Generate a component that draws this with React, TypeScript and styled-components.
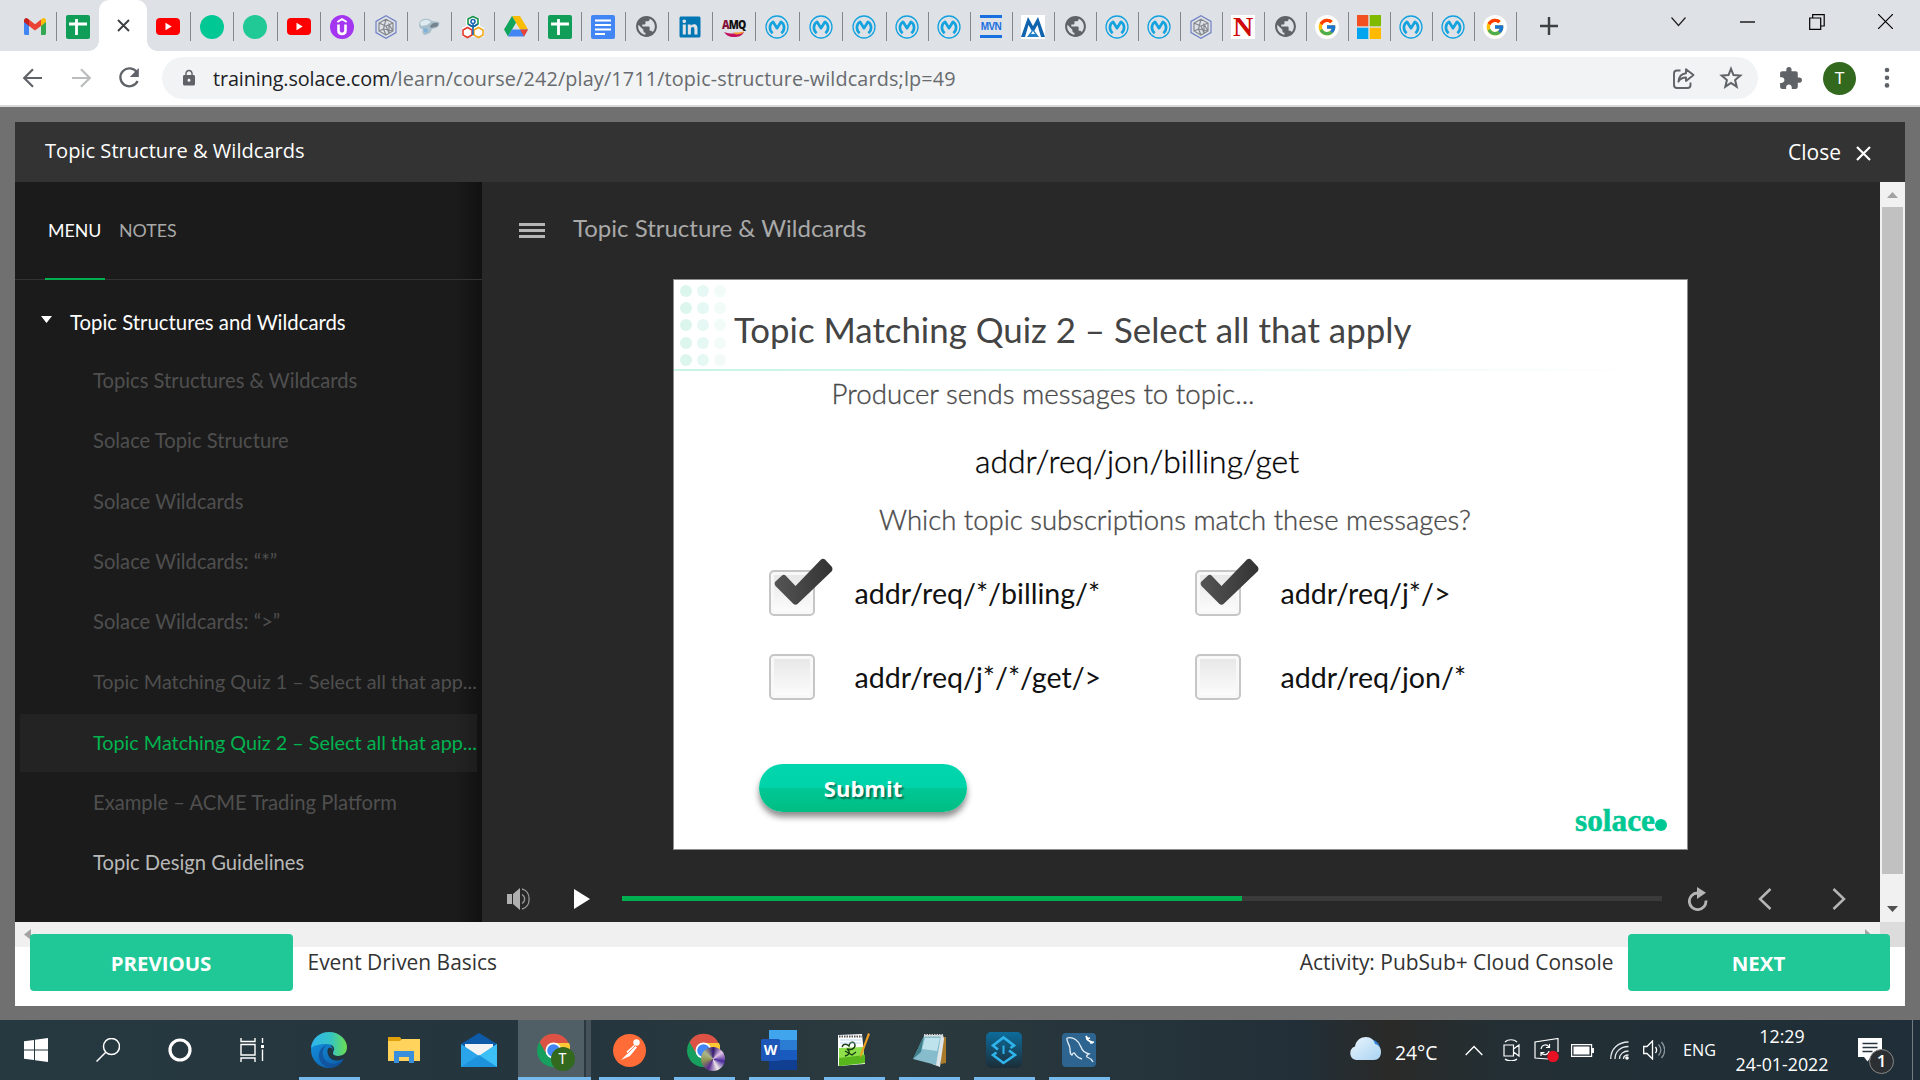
import React from "react";
import styled, { createGlobalStyle, css } from "styled-components";
import { FcGoogle } from "react-icons/fc";
import { FaLinkedin } from "react-icons/fa";
import { MdExtension, MdLock, MdPublic } from "react-icons/md";

const SANS = `"Open Sans", "Noto Sans", sans-serif`;
const LATO = `Lato, "Open Sans", sans-serif`;

const Global = createGlobalStyle`
  * { box-sizing: border-box; }
  body { margin: 0; background: #707070; font-family: ${SANS}; overflow: hidden; }
  svg { display: block; flex: none; }
`;

const Screen = styled.div`
  width: 1920px;
  height: 1080px;
  display: flex;
  flex-direction: column;
  overflow: hidden;
`;

/* ---------- browser ---------- */
const TabStrip = styled.div`
  height: 51px;
  background: #dee1e6;
  display: flex;
  align-items: flex-start;
  padding-left: 13px;
`;
const Tab = styled.div<{ $w: number; $sep?: boolean }>`
  width: ${(p) => p.$w}px;
  height: 29px;
  margin-top: 12px;
  display: flex;
  align-items: center;
  justify-content: center;
  flex: none;
  border-right: 1.4px solid ${(p) => (p.$sep ? "#84878b" : "transparent")};
`;
const ActiveTab = styled.div`
  width: 48px;
  height: 51px;
  flex: none;
  background: #fff;
  border-radius: 10px 10px 0 0;
  display: flex;
  align-items: center;
  justify-content: center;
  position: relative;
  &::before, &::after {
    content: "";
    position: absolute;
    bottom: 0;
    width: 10px;
    height: 10px;
  }
  &::before { left: -10px; background: radial-gradient(circle at 0 0, transparent 9.5px, #fff 10px); }
  &::after { right: -10px; background: radial-gradient(circle at 100% 0, transparent 9.5px, #fff 10px); }
`;
const NewTab = styled.div`
  width: 64px;
  height: 51px;
  display: flex;
  align-items: center;
  justify-content: center;
`;
const WindowControls = styled.div`
  margin-left: auto;
  display: flex;
  height: 43px;
`;
const WindowButton = styled.div`
  width: 69px;
  display: flex;
  align-items: center;
  justify-content: center;
`;
const Toolbar = styled.div`
  height: 54px;
  background: #fff;
  display: flex;
  align-items: center;
  padding: 0 21px 0 21px;
`;
const NavButtons = styled.div`
  display: flex;
  gap: 24px;
  width: 141px;
`;
const Omnibox = styled.div`
  width: 1596px;
  height: 42px;
  border-radius: 21px;
  background: #f1f3f4;
  display: flex;
  align-items: center;
  padding: 0 15px 0 18px;
`;
const Url = styled.div`
  font: 400 19.8px/42px ${SANS};
  color: #686b6f;
  margin-left: 15px;
  flex: 1;
  padding-top: 1px;
  letter-spacing: 0.15px;
  white-space: nowrap;
`;
const Domain = styled.span`color: #202124; letter-spacing: -0.1px;`;
const OmniActions = styled.div`display: flex; gap: 24px; align-items: center;`;
const ToolbarActions = styled.div`display: flex; align-items: center; margin-left: 20px;`;
const Avatar = styled.div`
  width: 33px;
  height: 33px;
  border-radius: 50%;
  background: #33691e;
  color: #fff;
  font: 400 17px/33px Roboto, sans-serif;
  text-align: center;
  margin: 0 28px 0 20px;
`;
const Hairline = styled.div`height: 2px; background: #d9d9d9;`;

/* ---------- favicons ---------- */
const GreenDot = styled.div<{ $c: string }>`
  width: 24px; height: 24px; border-radius: 50%; background: ${(p) => p.$c};
`;
const GoogleDisc = styled.div`
  width: 24px; height: 24px; border-radius: 50%; background: #fff; display: grid; place-items: center;
`;
const AmqIcon = styled.div`
  display: flex; flex-direction: column; align-items: center; width: 24px; height: 20px;
`;
const AmqText = styled.div`
  font: 800 13px/14px "Open Sans", sans-serif; letter-spacing: -1px; color: #111; transform: scaleX(0.8);
  & > span { color: #84123c; }
`;
const MvnIcon = styled.div`
  width: 22px; height: 23px; border-top: 3px solid #1a6fe0; border-bottom: 3px solid #1a6fe0;
  font: 700 10px/17px "Liberation Sans", sans-serif; color: #1a6fe0; text-align: center; letter-spacing: -0.6px;
`;
const NIcon = styled.div`
  width: 24px; height: 24px; background: #fff; color: #cf0a0a;
  font: 700 28px/24px "Liberation Serif", serif; text-align: center;
`;

const Gmail = () => (
  <svg width="22" height="17" viewBox="0 0 22 17">
    <path d="M0 2v13.500C0 16.300.7 17 1.500 17H5V7L0 3z" fill="#4285f4" />
    <path d="M22 2v13.500c0 .8-.7 1.500-1.500 1.500H17V7l5-4z" fill="#34a853" />
    <path d="M17 1.500V8l5-4V2.500C22 .3 19.600-.7 18 .7z" fill="#fbbc04" />
    <path d="M5 8V1.500l6 4.700 6-4.700V8l-6 4.600z" fill="#ea4335" />
    <path d="M0 2.500V4l5 4V1.500L4 .7C2.400-.7 0 .3 0 2.500z" fill="#c5221f" />
  </svg>
);
const Sheets = () => (
  <svg width="24" height="24" viewBox="0 0 24 24">
    <rect width="24" height="24" rx="2" fill="#0f9d58" />
    <path d="M3 9h18M10.500 4v16" stroke="#fff" strokeWidth="2.800" fill="none" />
  </svg>
);
const Docs = () => (
  <svg width="24" height="24" viewBox="0 0 24 24">
    <rect width="24" height="24" rx="2" fill="#4285f4" />
    <path d="M4 5.500h16M4 10h16M4 14.500h16M4 19h10" stroke="#fff" strokeWidth="2" />
  </svg>
);
const YouTube = () => (
  <svg width="24" height="18" viewBox="0 0 24 18">
    <rect width="24" height="17" rx="4" fill="#f00" />
    <path d="M9.500 4.800v7.400l6.200-3.700z" fill="#fff" />
  </svg>
);
const Udemy = () => (
  <svg width="24" height="24" viewBox="0 0 24 24">
    <circle cx="12" cy="12" r="12" fill="#a435f0" />
    <path d="M7.300 7 12 4.200 16.700 7" stroke="#fff" strokeWidth="2" fill="none" />
    <path d="M8.500 9.500v6c0 4.600 7 4.600 7 0v-6" stroke="#fff" strokeWidth="2.600" fill="none" />
  </svg>
);
const Hexagon = () => (
  <svg width="24" height="24" viewBox="0 0 24 24" fill="none" strokeWidth="1.200">
    <path d="M12 .8 22 6.400v11.200L12 23.200 2 17.600V6.400z" stroke="#6f80c4" />
    <path d="M12 4.200 19 8v8l-7 4-7-4V8zM12 4.200 9.500 14 5 16M5 8l7 3 7-3M9.500 14l9.500 2M12 11l3 7M9.500 14 12 20M15 18V9.500L19 16" stroke="#84898f" />
  </svg>
);
const Bird = () => (
  <svg width="22" height="18" viewBox="0 0 22 18">
    <path d="M1 6C2 1 9-1 14 3l7 1c1 2 0 5-3 6l-4 1-2 4-5 2c-3-1-3-4-2-6-3 0-4-2-4-5z" fill="#a9bfcb" />
    <path d="M2 5c3-4 8-4 11-1l-4 3-6 1z" fill="#dfeaf0" />
    <path d="M12 8c2-3 5-4 8-3 1 2-1 4-3 4l-4 1z" fill="#75838e" />
    <path d="M5 10l5 1-1 4-3-1z" fill="#7fb2da" />
  </svg>
);
const Rings = () => (
  <svg width="24" height="24" viewBox="0 0 24 24" fill="none" strokeWidth="1.600">
    <path d="M12 0l7 4v7l4 2v9H1v-9l4-2V4z" fill="#fff" />
    <path d="M12 1.500 17 4v5l-5 3-5-3V4z" stroke="#159447" />
    <path d="M6.500 12.500 11 15v5l-4.500 2.500L2 20v-5z" stroke="#e43b2e" />
    <path d="M17.500 12.500 22 15v5l-4.500 2.500L13 20v-5z" stroke="#f2a91d" />
    <path d="M12 9v11M8 9c1 3 7 3 8 0" stroke="#1c66b4" />
    <circle cx="12" cy="6.500" r="2" stroke="#1c66b4" />
  </svg>
);
const Drive = () => (
  <svg width="24" height="21" viewBox="0 0 24 21">
    <path d="M8 0h8l8 13.500h-8z" fill="#fbbc04" />
    <path d="M8 0l4 6.800L4 20.500 0 13.500z" fill="#11a45c" />
    <path d="M8 13.500h16L20 20.500H4z" fill="#4285f4" />
    <path d="M16 13.500h8L20 20.500z" fill="#ea4335" />
  </svg>
);
const Mule = () => (
  <svg width="24" height="24" viewBox="0 0 24 24" fill="none" stroke="#15a3df">
    <circle cx="12" cy="12" r="11" strokeWidth="1.300" />
    <path d="M7.600 18.200C3.700 14.800 4.200 9.200 8 6.800l4 6.400 4-6.400c3.800 2.400 4.300 8 .4 11.400" strokeWidth="2.700" strokeLinejoin="round" />
  </svg>
);
const Peaks = () => (
  <svg width="24" height="24" viewBox="0 0 24 24">
    <rect width="24" height="24" fill="#fff" />
    <path d="M0 22 7 2l5 9 5-9 7 20h-4L16.500 10 12 18 7.500 10 4 22z" fill="#1063ad" />
    <path d="M6 22l6-8 6 8z" fill="#1f7fc9" />
    <path d="M10 19l2-3 2 3z" fill="#fff" />
  </svg>
);
const Microsoft = () => (
  <svg width="24" height="24" viewBox="0 0 24 24">
    <path d="M0 0h11.300v11.300H0z" fill="#f25022" />
    <path d="M12.700 0H24v11.300H12.700z" fill="#7fba00" />
    <path d="M0 12.700h11.300V24H0z" fill="#00a4ef" />
    <path d="M12.700 12.700H24V24H12.700z" fill="#ffb900" />
  </svg>
);
const Favicon = ({ kind }: { kind: string }) => {
  switch (kind) {
    case "gmail": return <Gmail />;
    case "sheets": return <Sheets />;
    case "docs": return <Docs />;
    case "youtube": return <YouTube />;
    case "green": return <GreenDot $c="#00c895" />;
    case "green2": return <GreenDot $c="#21c997" />;
    case "udemy": return <Udemy />;
    case "hex": return <Hexagon />;
    case "bird": return <Bird />;
    case "rings": return <Rings />;
    case "drive": return <Drive />;
    case "globe": return <MdPublic size={25} color="#5f6368" />;
    case "linkedin": return <FaLinkedin size={24} color="#0077b5" />;
    case "amq": return (
      <AmqIcon>
        <AmqText><span>A</span>MQ</AmqText>
        <svg width="20" height="6" viewBox="0 0 20 6">
          <path d="M0 1c6 2 12 2 20 0-2 4-5 5-10 5S2 4 0 1z" fill="#c3125f" />
          <path d="M9 1.500c4 0 8 0 11-1-1 2-4 3-8 3z" fill="#f59b23" />
        </svg>
      </AmqIcon>
    );
    case "mule": return <Mule />;
    case "mvn": return <MvnIcon>MVN</MvnIcon>;
    case "peaks": return <Peaks />;
    case "n": return <NIcon>N</NIcon>;
    case "google": return <GoogleDisc><FcGoogle size={20} /></GoogleDisc>;
    default: return <Microsoft />;
  }
};

const wideTabs = ["green", "green2", "youtube", "udemy", "hex", "bird", "rings", "drive", "sheets", "docs", "globe", "linkedin", "amq", "mule", "mule", "mule"];
const narrowTabs = ["mule", "mule", "mvn", "peaks", "globe", "mule", "mule", "hex", "n", "globe", "google", "microsoft", "mule", "mule", "google"];

const Browser = () => (
  <>
    <TabStrip>
      <Tab $w={44} $sep><Favicon kind="gmail" /></Tab>
      <Tab $w={42}><Favicon kind="sheets" /></Tab>
      <ActiveTab>
        <svg width="13" height="13" viewBox="0 0 13 13"><path d="M1 1l11 11M12 1 1 12" stroke="#3c4043" strokeWidth="1.900" /></svg>
      </ActiveTab>
      <Tab $w={43.500} $sep><Favicon kind="youtube" /></Tab>
      {wideTabs.map((k, i) => <Tab key={i} $w={43.500} $sep><Favicon kind={k} /></Tab>)}
      {narrowTabs.map((k, i) => <Tab key={i} $w={42} $sep><Favicon kind={k} /></Tab>)}
      <NewTab>
        <svg width="18" height="18" viewBox="0 0 18 18"><path d="M9 0v18M0 9h18" stroke="#3c4043" strokeWidth="2.400" /></svg>
      </NewTab>
      <WindowControls>
        <WindowButton><svg width="15" height="10" viewBox="0 0 15 10"><path d="M.5.5l7 8 7-8" fill="none" stroke="#222" strokeWidth="1.200" /></svg></WindowButton>
        <WindowButton><svg width="15" height="2" viewBox="0 0 15 2"><path d="M0 1h15" stroke="#000" strokeWidth="1.300" /></svg></WindowButton>
        <WindowButton><svg width="16" height="16" viewBox="0 0 16 16"><path d="M.7 4h11v11.300H.7zM3.700 4V.7h11.500V12h-3.500" fill="none" stroke="#000" strokeWidth="1.200" /></svg></WindowButton>
        <WindowButton><svg width="15" height="15" viewBox="0 0 15 15"><path d="M0 0l15 15M15 0 0 15" stroke="#000" strokeWidth="1.200" /></svg></WindowButton>
      </WindowControls>
    </TabStrip>
    <Toolbar>
      <NavButtons>
        <svg width="24" height="24" viewBox="0 0 24 24"><path d="M21 12H3.500M12 3.200 3.200 12l8.800 8.800" fill="none" stroke="#5f6368" strokeWidth="2.200" /></svg>
        <svg width="24" height="24" viewBox="0 0 24 24"><path d="M3 12h17.500M12 3.200l8.800 8.800-8.800 8.800" fill="none" stroke="#babcbe" strokeWidth="2.200" /></svg>
        <svg width="24" height="24" viewBox="0 0 24 24"><path d="M19.800 6.200A9 9 0 1 0 20.600 15" fill="none" stroke="#5f6368" strokeWidth="2.300" /><path d="M21.800 2v9h-9z" fill="#5f6368" /></svg>
      </NavButtons>
      <Omnibox>
        <MdLock size={18} color="#5f6368" />
        <Url><Domain>training.solace.com</Domain>/learn/course/242/play/1711/topic-structure-wildcards;lp=49</Url>
        <OmniActions>
          <svg width="23" height="23" viewBox="0 0 23 23" fill="none" stroke="#5f6368" strokeWidth="1.900" strokeLinejoin="round">
            <path d="M8.500 3.500H5a3 3 0 0 0-3 3V18a3 3 0 0 0 3 3h10.500a3 3 0 0 0 3-3v-2.500" />
            <path d="M14 2.200 21.500 8 14 14v-3.500c-3.500 0-6 1.200-7.500 4.200.3-5.200 3-8 7.500-8.500z" />
          </svg>
          <svg width="24" height="24" viewBox="0 0 24 24" fill="none" stroke="#5f6368" strokeWidth="2"><path d="M12 2.800l2.500 6.300 6.800.5-5.200 4.400 1.600 6.700L12 17l-5.700 3.700L7.900 14 2.700 9.600l6.800-.5z" /></svg>
        </OmniActions>
      </Omnibox>
      <ToolbarActions>
        <MdExtension size={25} color="#5f6368" />
        <Avatar>T</Avatar>
        <svg width="6" height="22" viewBox="0 0 6 22" fill="#5f6368"><circle cx="3" cy="3" r="2.300" /><circle cx="3" cy="10.700" r="2.300" /><circle cx="3" cy="18.400" r="2.300" /></svg>
      </ToolbarActions>
    </Toolbar>
    <Hairline />
  </>
);

/* ---------- course modal ---------- */
const PageArea = styled.main`
  height: 913px;
  background: #707070;
  padding: 15px 15px 14px;
`;
const Modal = styled.div`
  height: 884px;
  background: #fff;
  display: flex;
  flex-direction: column;
`;
const ModalHeader = styled.header`
  height: 60px;
  background: #333;
  color: #fff;
  display: flex;
  justify-content: space-between;
  align-items: center;
  padding: 0 34px 0 30px;
`;
const ModalTitle = styled.div`font: 400 20.100px/58px ${SANS}; height: 60px;`;
const CloseButton = styled.div`
  display: flex;
  align-items: center;
  gap: 15px;
  font: 400 21px/60px ${SANS};
  & svg { margin-top: 3px; }
`;
const Player = styled.div`display: flex; height: 740px;`;
const Sidebar = styled.aside`
  width: 467px;
  background: #1b1b1b;
  background-image: linear-gradient(to right, transparent 440px, #111 467px);
  font-family: ${LATO};
`;
const SideTabs = styled.div`
  height: 98px;
  border-bottom: 1px solid #333;
  padding-left: 30px;
  display: flex;
`;
const SideTab = styled.div<{ $active?: boolean }>`
  height: 98px;
  padding: 0 3px;
  margin-right: 11px;
  font-size: 17.800px;
  line-height: 97px;
  color: ${(p) => (p.$active ? "#fff" : "#a8a8a8")};
  ${(p) => p.$active && css`border-bottom: 2px solid #00b050; width: 60px;`}
`;
const SectionRow = styled.div`
  height: 72px;
  display: flex;
  align-items: center;
  color: #fff;
  font-size: 20.330px;
  padding: 12px 0 0 26px;
  gap: 18px;
  & svg { margin-bottom: 5px; }
`;
const LessonRow = styled.div<{ $state?: "current" | "next"; $long: boolean }>`
  height: 58px;
  margin: 0 5px 2.300px;
  padding-left: 73px;
  font-size: ${(p) => (p.$long ? 19.800 : 20.200)}px;
  line-height: 57px;
  white-space: nowrap;
  color: ${(p) => (p.$state === "current" ? "#00b34f" : p.$state === "next" ? "#b8b8b8" : "#4f4f4f")};
  background: ${(p) => (p.$state === "current" ? "rgba(60,60,60,0.25)" : "transparent")};
`;
const Stage = styled.section`
  width: 1398px;
  background: #282828;
  display: flex;
  flex-direction: column;
`;
const StageHeader = styled.div`
  height: 97px;
  display: flex;
  align-items: center;
  padding-left: 37px;
  gap: 28px;
  color: #a9a9a9;
  font: 400 24px/92px ${LATO};
`;
const StageTitle = styled.div`height: 97px;`;
const Hamburger = styled.div`
  width: 26px;
  height: 15px;
  border-top: 3px solid #b5b5b5;
  border-bottom: 3px solid #b5b5b5;
  padding: 3px 0;
  background: #b5b5b5;
  background-clip: content-box;
`;
const Slide = styled.div`
  width: 1015px;
  height: 571px;
  margin-left: 191px;
  border: 1px solid #8c8c8c;
  background: #fff;
  display: flex;
  flex-direction: column;
  font-family: ${LATO};
`;
const SlideHeader = styled.div`height: 89px; display: flex;`;
const DotGrid = styled.div`
  display: grid;
  grid-template-columns: repeat(3, 12px);
  grid-auto-rows: 12px;
  gap: 5.200px;
  padding: 5px 0 0 6px;
  width: 60px;
`;
const Dot = styled.i<{ $c: string }>`border-radius: 50%; background: ${(p) => p.$c};`;
const SlideTitle = styled.h1`
  margin: 0;
  padding-top: 9px;
  font: 400 34.850px/81px ${LATO};
  color: #444;
  white-space: nowrap;
`;
const SlideRule = styled.div`height: 2px; background: linear-gradient(to right, #c6f4e6, #fff 96%);`;
const Prompt = styled.p<{ $x: number; $top: number; $size: number; $color: string }>`
  margin: ${(p) => p.$top}px 0 0 ${(p) => p.$x}px;
  font: 300 ${(p) => p.$size}px/40px ${LATO};
  color: ${(p) => p.$color};
  -webkit-text-stroke: 0.350px ${(p) => p.$color};
  white-space: nowrap;
`;
const Options = styled.div`
  display: grid;
  grid-template-columns: 426px 400px;
  grid-auto-rows: 45px;
  row-gap: 39.500px;
  margin: 30px 0 0 95px;
`;
const Option = styled.label`
  display: flex;
  align-items: center;
  gap: 39.500px;
  font: 400 28.600px/44px ${LATO};
  color: #111;
  white-space: nowrap;
`;
const Box = styled.span`
  width: 46px;
  height: 46px;
  flex: none;
  border: 2px solid #c6c6c6;
  border-radius: 5px;
  background: linear-gradient(#e6e6e6, #fdfdfd);
  box-shadow: inset 0 0 0 3px #f8f8f8;
`;
const Tick = styled.svg`position: relative; left: 3px; top: -14px; overflow: visible;`;
const SlideFooter = styled.div`
  display: flex;
  justify-content: space-between;
  padding: 64px 20px 0 85px;
`;
const Submit = styled.button`
  width: 208px;
  height: 48px;
  border: 0;
  padding: 0;
  border-radius: 24px;
  background: linear-gradient(#00d6ae 0, #00d3a9 50%, #00c896 50%, #00bd83 100%);
  box-shadow: 0 5px 6px rgba(0, 0, 0, 0.45);
  color: #fff;
  font: 700 22px/46px ${SANS};
  text-shadow: 2px 2px 2px rgba(0, 0, 0, 0.45);
`;
const Logo = styled.div`
  display: flex;
  align-items: center;
  padding-top: 33px;
  height: 82px;
  color: #00c895;
  font: 700 31.300px/40px "Liberation Serif", serif;
  -webkit-text-stroke: 0.5px #00c895;
  &::after {
    content: "";
    width: 12px;
    height: 12px;
    border-radius: 50%;
    background: #00c895;
    margin-top: 7px;
  }
`;
const Controls = styled.div`
  height: 72px;
  display: flex;
  align-items: center;
  padding: 25px 0 0 25px;
`;
const PlayIcon = styled.svg`margin-left: 42px;`;
const Track = styled.div`
  width: 1040px;
  height: 5px;
  background: #3b3b3b;
  margin: 0 26px 1px 32px;
`;
const Fill = styled.div`width: 620px; height: 5px; background: #00b050;`;
const StepArrows = styled.div`display: flex; gap: 60px; margin-left: 50px;`;
const VScroll = styled.div`
  width: 25px;
  background: #f1f1f1;
  display: flex;
  flex-direction: column;
  align-items: center;
`;
const ScrollArrow = styled.div<{ $h: number; $pt: number }>`
  height: ${(p) => p.$h}px;
  padding-top: ${(p) => p.$pt}px;
`;
const Thumb = styled.div`width: 21px; height: 667px; background: #c1c1c1;`;
const HScroll = styled.div`
  height: 25px;
  background: #f0f0f0;
  display: flex;
  padding-left: 9px;
  & > svg { margin-top: 7px; }
`;
const Corner = styled.div`width: 25px; height: 25px; background: #dcdcdc; margin-left: 9px;`;
const Spacer = styled.div`flex: 1;`;
const ModalFooter = styled.footer`
  height: 59px;
  margin-top: -13px;
  padding: 0 15px;
  display: flex;
  align-items: flex-start;
  gap: 14.500px;
  color: #333;
  font: 400 20.950px/57px ${SANS};
  position: relative;
`;
const NavButton = styled.button<{ $w: number }>`
  width: ${(p) => p.$w}px;
  height: 57px;
  border: 0;
  padding: 0 1px 0 0;
  border-radius: 4px;
  background: #20c897;
  color: #fff;
  font: 700 20.400px/58px ${SANS};
`;

const lessons: { text: string; state?: "current" | "next" }[] = [
  { text: "Topics Structures & Wildcards" },
  { text: "Solace Topic Structure" },
  { text: "Solace Wildcards" },
  { text: "Solace Wildcards: “*”" },
  { text: "Solace Wildcards: “>”" },
  { text: "Topic Matching Quiz 1 – Select all that app..." },
  { text: "Topic Matching Quiz 2 – Select all that app...", state: "current" },
  { text: "Example – ACME Trading Platform" },
  { text: "Topic Design Guidelines", state: "next" },
];
const options = [
  { text: "addr/req/*/billing/*", checked: true },
  { text: "addr/req/j*/>", checked: true },
  { text: "addr/req/j*/*/get/>", checked: false },
  { text: "addr/req/jon/*", checked: false },
];
const dotColors = ["#dcf6ee", "#e6f8f3", "#f2fbf8"];

const Course = () => (
  <PageArea>
    <Modal>
      <ModalHeader>
        <ModalTitle>Topic Structure &amp; Wildcards</ModalTitle>
        <CloseButton>
          Close
          <svg width="15" height="15" viewBox="0 0 15 15"><path d="M1 1l13 13M14 1 1 14" stroke="#fff" strokeWidth="2.200" /></svg>
        </CloseButton>
      </ModalHeader>
      <Player>
        <Sidebar>
          <SideTabs>
            <SideTab $active>MENU</SideTab>
            <SideTab>NOTES</SideTab>
          </SideTabs>
          <SectionRow>
            <svg width="11" height="7" viewBox="0 0 11 7"><path d="M0 0h11L5.500 7z" fill="#fff" /></svg>
            Topic Structures and Wildcards
          </SectionRow>
          {lessons.map((l) => <LessonRow key={l.text} $state={l.state} $long={l.text.length > 40}>{l.text}</LessonRow>)}
        </Sidebar>
        <Stage>
          <StageHeader><Hamburger /><StageTitle>Topic Structure &amp; Wildcards</StageTitle></StageHeader>
          <Slide>
            <SlideHeader>
              <DotGrid>{Array.from({ length: 15 }, (_, i) => <Dot key={i} $c={dotColors[i % 3]} />)}</DotGrid>
              <SlideTitle>Topic Matching Quiz 2 – Select all that apply</SlideTitle>
            </SlideHeader>
            <SlideRule />
            <Prompt $x={157.500} $top={3} $size={27.700} $color="#4a4a4a">Producer sends messages to topic...</Prompt>
            <Prompt $x={301} $top={27} $size={31.900} $color="#000">addr/req/jon/billing/get</Prompt>
            <Prompt $x={205} $top={19} $size={27.520} $color="#4a4a4a">Which topic subscriptions match these messages?</Prompt>
            <Options>
              {options.map((o) => (
                <Option key={o.text}>
                  <Box>
                    {o.checked && (
                      <Tick width="60" height="47" viewBox="0 0 60 47">
                        <defs><linearGradient id="tick" x1="0" x2="1"><stop offset="0" stopColor="#555" /><stop offset="1" stopColor="#333" /></linearGradient></defs>
                        <path d="M2 23 8 17.500Q10 16 12 18L21.500 28 47 1.500Q49 0 51 1.500L58 9Q59 11 58 13L23.500 46Q21.500 47.500 19.500 46L1.500 28Q-.5 25 2 23z" fill="url(#tick)" />
                      </Tick>
                    )}
                  </Box>
                  {o.text}
                </Option>
              ))}
            </Options>
            <SlideFooter>
              <Submit>Submit</Submit>
              <Logo>solace</Logo>
            </SlideFooter>
          </Slide>
          <Controls>
            <svg width="25" height="22" viewBox="0 0 25 22">
              <path d="M0 6h5v10H0zM6 6l7-6v22l-7-6z" fill="#b0b0b0" />
              <path d="M15 6.500c3.500 2 3.500 7 0 9M15 1c9.500 2 9.500 18 0 20" fill="none" stroke="#999" strokeWidth="1.300" />
            </svg>
            <PlayIcon width="16" height="20" viewBox="0 0 16 20"><path d="M0 0l16 10L0 20z" fill="#fff" /></PlayIcon>
            <Track><Fill /></Track>
            <svg width="20" height="24" viewBox="0 0 20 24">
              <path d="M17.900 13.500A8.300 8.300 0 1 1 9.500 6" fill="none" stroke="#b5b5b5" strokeWidth="2.800" />
              <path d="M9 0l9 5.700L9 12z" fill="#b5b5b5" />
            </svg>
            <StepArrows>
              <svg width="14" height="22" viewBox="0 0 14 22"><path d="M12.500 1 2 11l10.500 10" fill="none" stroke="#b5b5b5" strokeWidth="2.500" /></svg>
              <svg width="14" height="22" viewBox="0 0 14 22"><path d="M1.500 1 12 11 1.500 21" fill="none" stroke="#b5b5b5" strokeWidth="2.500" /></svg>
            </StepArrows>
          </Controls>
        </Stage>
        <VScroll>
          <ScrollArrow $h={25} $pt={10}><svg width="11" height="6" viewBox="0 0 11 6"><path d="M0 6h11L5.500 0z" fill="#a3a3a3" /></svg></ScrollArrow>
          <Thumb />
          <ScrollArrow $h={48} $pt={32}><svg width="11" height="6" viewBox="0 0 11 6"><path d="M0 0h11L5.500 6z" fill="#505050" /></svg></ScrollArrow>
        </VScroll>
      </Player>
      <HScroll>
        <svg width="7" height="11" viewBox="0 0 7 11"><path d="M7 0v11L0 5.500z" fill="#a3a3a3" /></svg>
        <Spacer />
        <svg width="6" height="11" viewBox="0 0 6 11"><path d="M0 0v11l6-5.500z" fill="#a3a3a3" /></svg>
        <Corner />
      </HScroll>
      <ModalFooter>
        <NavButton $w={263}>PREVIOUS</NavButton>
        <span>Event Driven Basics</span>
        <Spacer />
        <span>Activity: PubSub+ Cloud Console</span>
        <NavButton $w={262}>NEXT</NavButton>
      </ModalFooter>
    </Modal>
  </PageArea>
);

/* ---------- taskbar ---------- */
const Bar = styled.div`
  height: 60px;
  background: linear-gradient(to right, #263840 0, #25353e 560px, #2a3a3e 900px, #222f38 1300px, #2a2a28 1390px, #232f34 1500px, #1f2e38 1920px);
  display: flex;
  color: #fff;
`;
const SystemItem = styled.div`width: 72px; display: flex; align-items: center; justify-content: center;`;
const AppItem = styled.div<{ $state?: "open" | "active" }>`
  width: 75px;
  height: 60px;
  display: flex;
  align-items: center;
  justify-content: center;
  ${(p) => p.$state === "open" && css`
    background: linear-gradient(#76b9ed, #76b9ed) 50% 100% / 61px 3px no-repeat;
  `}
  ${(p) => p.$state === "active" && css`
    background:
      linear-gradient(#76b9ed, #76b9ed) 50% 100% / 73px 3px no-repeat,
      linear-gradient(to right, #505f66 66px, #2b383f 66px, #2b383f 68px, #465259 68px) 1px 0 / 73px 60px no-repeat;
  `}
`;
const AppGroup = styled.div`display: flex; margin-left: 3.500px;`;
const WithBadge = styled.div`position: relative; width: 38px; height: 38px; margin: 3px 0 0 3px;`;
const ProfileBadge = styled.div<{ $photo?: boolean }>`
  position: absolute;
  left: 14px;
  top: 14px;
  width: 24px;
  height: 24px;
  border-radius: 50%;
  background: ${(p) => (p.$photo ? "conic-gradient(#2b1466, #e7c6ea, #4a2a9a, #efe9e9, #5a2d91, #8a8f50, #aeb78a, #3a1c7a)" : "#33691e")};
  font: 400 14px/24px Roboto, sans-serif;
  text-align: center;
`;
const Tray = styled.div`margin-left: auto; display: flex; align-items: center; font-family: ${SANS};`;
const Temperature = styled.div`font-size: 19.300px; width: 70px; padding-top: 4px; margin-left: 14px;`;
const TrayIcons = styled.div`display: grid; grid-template-columns: 38px 31px 37px 39px 33px 40px; align-items: center;`;
const Lang = styled.div`font-size: 16.200px; width: 52px; height: 24px; line-height: 24px;`;
const Clock = styled.div`
  width: 94px;
  font-size: 17.800px;
  line-height: 28px;
  text-align: center;
  white-space: nowrap;
`;
const Notifications = styled.div`
  position: relative; width: 54px; height: 44px; margin-left: 29px; padding-top: 10px;
`;
const Count = styled.div`
  position: absolute;
  left: 11px;
  top: 21px;
  width: 25px;
  height: 25px;
  border-radius: 50%;
  border: 1.500px solid #888;
  background: #2b2f31;
  font: 600 17px/21px ${SANS};
  text-align: center;
`;
const ShowDesktop = styled.div`width: 8px; height: 60px; border-left: 1px solid #727b80;`;
const WordIcon = () => (
  <svg width="36" height="40" viewBox="0 0 36 40">
    <path d="M8 0h28v10H8z" fill="#41a5ee" /><path d="M8 10h28v10H8z" fill="#2b7cd3" />
    <path d="M8 20h28v10H8z" fill="#185abd" /><path d="M8 30h28v10H8z" fill="#103f91" />
    <rect y="9" width="19" height="22" rx="1.500" fill="#1c56b8" />
    <text x="9.500" y="25" fontSize="14" fontWeight="700" fontFamily="Open Sans, sans-serif" fill="#fff" textAnchor="middle">W</text>
  </svg>
);
const Chrome = () => (
  <svg width="33" height="40" viewBox="0 0 33 40">
    <g transform="translate(0 1)">
      <circle cx="16.500" cy="16.500" r="16.500" fill="#17a05d" />
      <path d="M16.500 9H32a16.500 16.500 0 0 1-15.500 24l7-12z" fill="#fcc934" />
      <path d="M9.500 20 2.500 8A16.500 16.500 0 0 1 31.500 9H16.500z" fill="#de5246" />
      <circle cx="16.500" cy="16.500" r="8" fill="#fff" />
      <circle cx="16.500" cy="16.500" r="6.300" fill="#4285f4" />
    </g>
  </svg>
);

const Taskbar = () => (
  <Bar>
    <SystemItem>
      <svg width="24" height="24" viewBox="0 0 24 24" fill="#fff"><path d="M0 3.300 10 2v9.500H0zM11 1.800 24 0v11.500H11zM0 12.500h10V22L0 20.700zM11 12.500h13V24l-13-1.800z" /></svg>
    </SystemItem>
    <SystemItem>
      <svg width="24" height="24" viewBox="0 0 24 24" fill="none" stroke="#fff" strokeWidth="1.500"><circle cx="15.500" cy="8.500" r="8" /><path d="M9.800 14.200.5 23.500" /></svg>
    </SystemItem>
    <SystemItem>
      <svg width="24" height="24" viewBox="0 0 24 24"><circle cx="12" cy="12" r="10" fill="none" stroke="#fff" strokeWidth="3.200" /></svg>
    </SystemItem>
    <SystemItem>
      <svg width="24" height="24" viewBox="0 0 24 24" fill="none" stroke="#fff" strokeWidth="1.400"><path d="M1 0v3.500h14V0M1 6.500h14v10.500H1zM1 24v-4h14v4M22.500 0v5M22.500 11.500V23" /><path d="M21 7h3v3h-3z" fill="#fff" stroke="none" /></svg>
    </SystemItem>
    <AppGroup>
      <AppItem $state="open">
        <svg width="36" height="36" viewBox="0 0 36 36">
          <defs>
            <linearGradient id="edgeTop" x1="0" x2="1"><stop offset="0" stopColor="#2fb5f0" /><stop offset=".55" stopColor="#35c4c4" /><stop offset="1" stopColor="#6be04e" /></linearGradient>
            <linearGradient id="edgeLow" x1="0" x2="1" y2="1"><stop offset="0" stopColor="#1493e0" /><stop offset="1" stopColor="#0c59a4" /></linearGradient>
          </defs>
          <path d="M0 18C0 11 3 7 9 6l10 5 6 13c3 1 6 1 9-1-2 7-8 13-16 13C8 36 0 28 0 18z" fill="url(#edgeLow)" />
          <path d="M0 16C1 6 9 0 18 0c11 0 18 8 18 15 0 6-4 9-9 9-4 0-6-1-5-3 3-5 0-9-6-9C8 12 2 14 0 16z" fill="url(#edgeTop)" />
          <path d="M16 13c-6 4-6 14 2 18 5 2 11 0 15-4-3 6-8 9-15 9-7-2-11-8-10-14 1-5 4-8 8-9z" fill="#124a94" opacity=".7" />
          <path d="M17.500 16c2.500-1 5 1 4.500 4-.5 3 2 4 6 4 3 0 5-.7 7-2-.5 1.700-1 3-1.700 4.200-5 3.300-12 3.300-15-1.200-2-3-2.500-7-.8-9z" fill="#22343d" />
        </svg>
      </AppItem>
      <AppItem>
        <svg width="32" height="28" viewBox="0 0 32 28"><path d="M0 1h12l2 3v6H0z" fill="#e0a10a" /><path d="M0 5h12l2-2h18v22H0z" fill="#ffd35c" /><path d="M6 27V15h20v12h-5v-6H11v6z" fill="#3a8fdd" /></svg>
      </AppItem>
      <AppItem>
        <svg width="36" height="34" viewBox="0 0 36 34"><path d="M0 11 18 0l18 11v10H0z" fill="#0c5aa8" /><path d="M4 11h28v14H4z" fill="#f3f3f3" /><path d="M0 11l18 12 18-12v23H0z" fill="#2aa5ea" /><path d="M18 23l18-12v23z" fill="#3cc0f5" /><path d="M0 34l18-12 18 12z" fill="#1d93dd" /></svg>
      </AppItem>
      <AppItem $state="active"><WithBadge><Chrome /><ProfileBadge>T</ProfileBadge></WithBadge></AppItem>
      <AppItem $state="open">
        <svg width="33" height="33" viewBox="0 0 33 33"><circle cx="16.500" cy="16.500" r="16.500" fill="#ff6c37" /><circle cx="23.500" cy="8.500" r="3.200" fill="#fff" /><path d="M21 11l3 2.500-7 8.500-9 4 6.500-6.500-1-2z" fill="#fff" /><path d="M22 12l-8 8" stroke="#ff6c37" strokeWidth=".8" /></svg>
      </AppItem>
      <AppItem $state="open"><WithBadge><Chrome /><ProfileBadge $photo /></WithBadge></AppItem>
      <AppItem $state="open"><WordIcon /></AppItem>
      <AppItem $state="open">
        <svg width="34" height="34" viewBox="0 0 34 34"><path d="M1 2l24-1 3 30-27 2z" fill="#fff" /><path d="M2 15l24-1 2 16-26 3z" fill="#8fe04a" /><path d="M2 25l26-3v8L2 33z" fill="#58b61c" /><path d="M5 14c2-5 6-2 7-1 1-5 6-5 6 0-1 3-4 4-8 3 4 3 2 6-2 7M8 18l7 4 4-3" fill="none" stroke="#173d10" strokeWidth="1.400" /><path d="M2 3.500h23" stroke="#555" strokeWidth="2" strokeDasharray="1.500 1" /><path d="M3 7h21M3 10h21" stroke="#9cc3ea" strokeWidth=".7" /><path d="M33 1 25 22l-2 3 .300-4L31 0z" fill="#f0a020" /></svg>
      </AppItem>
      <AppItem $state="open">
        <svg width="33" height="34" viewBox="0 0 33 34"><path d="M24 4h9v26l-5 1z" fill="#a87a2a" /><path d="M11 2h19l1 4-4 28-8-3z" fill="#dfe6e9" /><path d="M11 3h17l-5 29L0 26z" fill="#86bccb" /><path d="M11 3 8 19 0 26z" fill="#3e7f8c" /><path d="M12 5h15l-3 13-15-2z" fill="#bfe3ec" /><path d="M11 2.500h19" stroke="#d0d4d6" strokeWidth="3" strokeDasharray="1.500 1" /></svg>
      </AppItem>
      <AppItem $state="open">
        <svg width="36" height="36" viewBox="0 0 36 36"><defs><linearGradient id="sq" x2="0" y2="1"><stop offset="0" stopColor="#0d6c9c" /><stop offset="1" stopColor="#1c2d38" /></linearGradient></defs><rect width="36" height="36" rx="5" fill="url(#sq)" /><path d="M12 17.500 7 13.500 17.500 5.500 28 13.500l-3.500 2.500M23 18.500l6 4.500-11.500 8L7 23l3.500-2.500" fill="none" stroke="#2fb4ec" strokeWidth="2.600" /><path d="M17.500 13.500v8.500" stroke="#2fb4ec" strokeWidth="2" /></svg>
      </AppItem>
      <AppItem $state="open">
        <svg width="34" height="34" viewBox="0 0 34 34"><rect width="34" height="34" rx="4" fill="#2d6590" /><path d="M5 5c6-2 12 3 14 9 1 3 4 6 8 7-2 1-3 2-2 3 3 1 5 3 6 5M5 5c-1 4 3 6 3 11 0 3 1 6 2 6 1-2 2-3 3-1 2 2 2 4 7 5" fill="none" stroke="#e6eef5" strokeWidth="1.300" /><path d="M24 3l2 4 5 3M24 6l4-1M28 10l4-1" stroke="#fff" strokeWidth="1.800" /></svg>
      </AppItem>
    </AppGroup>
    <Tray>
      <svg width="32" height="26" viewBox="0 0 32 26"><defs><linearGradient id="cl" x2="1" y2="1"><stop offset="0" stopColor="#eaf5fd" /><stop offset="1" stopColor="#a9d3f2" /></linearGradient></defs><path d="M18 3c5-2 13 1 13 9v5H18z" fill="#2d7dd2" /><path d="M7 23a7 7 0 0 1-1-13.500C7 3 12 0 17 0c5 0 8 3 9 7 4 1 6 4 6 8 0 5-3 8-7 8z" fill="url(#cl)" /></svg>
      <Temperature>24°C</Temperature>
      <TrayIcons>
        <svg width="18" height="11" viewBox="0 0 18 11"><path d="M.7 10 9 1.500l8.300 8.500" fill="none" stroke="#fff" strokeWidth="1.400" /></svg>
        <svg width="17" height="22" viewBox="0 0 17 22" fill="none" stroke="#fff" strokeWidth="1.200"><path d="M1 6h9.500v11H1zM10.500 10 16 6v11l-5.500-4M2 3c3-3 9-3 12 0M2 20c3 2.500 9 2.500 12 0" /></svg>
        <svg width="26" height="24" viewBox="0 0 26 24" fill="none" stroke="#fff" strokeWidth="1.200"><path d="M14 21 1 20V4l23-3.500V14M7 11c1-5 6-5 8-2M15.500 6v3.500H12M15 13c-1 5-6 4-8 2M7 18v-3.500h3.500" /><circle cx="19" cy="18.500" r="5.700" fill="#e81123" stroke="none" /></svg>
        <svg width="23" height="13" viewBox="0 0 23 13"><path d="M.6.600h20v11.800H.6z" fill="none" stroke="#fff" strokeWidth="1.200" /><path d="M2.500 2.500h16v8h-16zM21 4h2v5h-2z" fill="#fff" /></svg>
        <svg width="19" height="19" viewBox="0 0 19 19" fill="none" stroke="#e5e8ea" strokeWidth="1.300"><path d="M.7 18C.7 8 8 1 18.500 1M5 18C5 11 10 5.500 18.500 5.500M9.500 18c0-5 4-8 9-8M13.500 18c0-2.500 2-4 5-4" /><circle cx="17" cy="17" r="1.800" fill="#fff" stroke="none" /></svg>
        <svg width="22" height="20" viewBox="0 0 22 20" fill="none" stroke="#fff" strokeWidth="1.300"><path d="M.7 6.500H4L9.500 1v18L4 13.500H.7z" /><path d="M12.500 7c1.500 2 1.500 4 0 6" /><path d="M15.500 4.500c3 3.500 3 7.500 0 11M18.500 2c4 5 4 11 0 16" stroke="#8a959b" /></svg>
      </TrayIcons>
      <Lang>ENG</Lang>
      <Clock>12:29<br />24-01-2022</Clock>
      <Notifications>
        <svg width="24" height="24" viewBox="0 0 24 24"><path d="M0 0h24v19H13l-3.500 4.500L6 19H0z" fill="#fff" /><path d="M4.500 5.500h15M4.500 9.500h15M4.500 13.500h10" stroke="#26343c" strokeWidth="1.300" /></svg>
        <Count>1</Count>
      </Notifications>
      <ShowDesktop />
    </Tray>
  </Bar>
);

export default function App() {
  return (
    <Screen>
      <Global />
      <Browser />
      <Course />
      <Taskbar />
    </Screen>
  );
}
